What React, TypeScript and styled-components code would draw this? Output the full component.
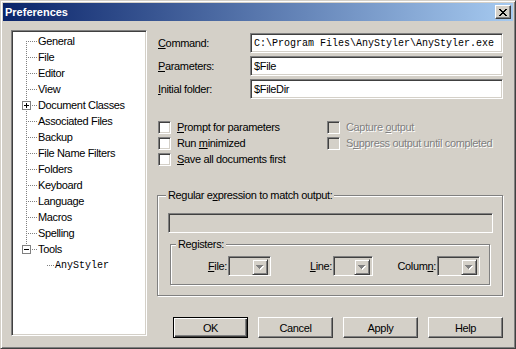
import React from 'react'
import styled, { createGlobalStyle } from 'styled-components'

const FACE = '#d4d0c8'
const SHADOW = '#808080'
const DARK = '#404040'
const MONO = '"Liberation Mono", "DejaVu Sans Mono", monospace'
const SANS = '"Liberation Sans", Arial, sans-serif'

const GlobalStyle = createGlobalStyle`
    html, body {
        margin: 0;
        padding: 0;
        background: ${FACE};
    }
    body {
        font-family: ${SANS};
        font-size: 11px;
        letter-spacing: -0.35px;
        color: #000;
    }
`

type TreeItem = {
    label: string
    expander?: 'plus' | 'minus'
}

const treeItems: TreeItem[] = [
    { label: 'General' },
    { label: 'File' },
    { label: 'Editor' },
    { label: 'View' },
    { label: 'Document Classes', expander: 'plus' },
    { label: 'Associated Files' },
    { label: 'Backup' },
    { label: 'File Name Filters' },
    { label: 'Folders' },
    { label: 'Keyboard' },
    { label: 'Language' },
    { label: 'Macros' },
    { label: 'Spelling' },
    { label: 'Tools', expander: 'minus' },
]

const CloseGlyph = () => (
    <svg width="8" height="7" viewBox="0 0 8 7" shapeRendering="crispEdges">
        <path
            fill="#000"
            d="M0 0h2v1h-2z M6 0h2v1h-2z M1 1h2v1h-2z M5 1h2v1h-2z M2 2h4v1h-4z M3 3h2v1h-2z M2 4h4v1h-4z M1 5h2v1h-2z M5 5h2v1h-2z M0 6h2v1h-2z M6 6h2v1h-2z"
        />
    </svg>
)

const ArrowGlyph = () => (
    <svg width="8" height="5" viewBox="0 0 8 5" shapeRendering="crispEdges">
        <path
            fill="#fff"
            d="M1 1h7v1h-7z M2 2h5v1h-5z M3 3h3v1h-3z M4 4h1v1h-1z"
        />
        <path
            fill={SHADOW}
            d="M0 0h7v1h-7z M1 1h5v1h-5z M2 2h3v1h-3z M3 3h1v1h-1z"
        />
    </svg>
)

// connector lines for one tree row: level 0 on x=12, level 1 on x=31
const TreeLines = ({
    first,
    last,
    child,
    expander,
}: {
    first?: boolean
    last?: boolean
    child?: boolean
    expander?: 'plus' | 'minus'
}) => {
    const x = child ? 31.5 : 12.5
    const width = child ? 41 : 24
    return (
        <svg width={width} height="16" shapeRendering="crispEdges">
            <g stroke={SHADOW} strokeWidth="1" strokeDasharray="1 1">
                <line x1={x} y1={first ? 8 : 0} x2={x} y2={last ? 8 : 16} />
                <line x1={x + 1} y1="8.5" x2={width - 1} y2="8.5" />
            </g>
            {expander && (
                <g>
                    <rect
                        x="8.5"
                        y="4.5"
                        width="8"
                        height="8"
                        fill="#fff"
                        stroke={SHADOW}
                    />
                    <line x1="10" y1="8.5" x2="15" y2="8.5" stroke="#000" />
                    {expander === 'plus' && (
                        <line x1="12.5" y1="6" x2="12.5" y2="11" stroke="#000" />
                    )}
                </g>
            )}
        </svg>
    )
}

export default function App(): JSX.Element {
    const renderTree = () =>
        treeItems.map((item, i) => (
            <TreeRow key={item.label}>
                <TreeLines
                    first={i === 0}
                    last={i === treeItems.length - 1}
                    expander={item.expander}
                />
                <TreeLabel>{item.label}</TreeLabel>
            </TreeRow>
        ))

    return (
        <>
            <GlobalStyle />
            <Window>
                <TitleBar>
                    <Title>Preferences</Title>
                    <CloseButton>
                        <CloseGlyph />
                    </CloseButton>
                </TitleBar>
                <Body>
                    <TreePanel>
                        {renderTree()}
                        <TreeRow>
                            <TreeLines child first last />
                            <TreeLabel $mono>AnyStyler</TreeLabel>
                        </TreeRow>
                    </TreePanel>

                    <RightPanel>
                        <Form>
                            <Label>
                                <u>C</u>ommand:
                            </Label>
                            <TextField $mono>
                                C:\Program Files\AnyStyler\AnyStyler.exe
                            </TextField>
                            <Label>
                                <u>P</u>arameters:
                            </Label>
                            <TextField>$File</TextField>
                            <Label>
                                <u>I</u>nitial folder:
                            </Label>
                            <TextField>$FileDir</TextField>
                        </Form>

                        <Options>
                            <Option>
                                <CheckBox />
                                <span>
                                    <u>P</u>rompt for parameters
                                </span>
                            </Option>
                            <Option $disabled>
                                <CheckBox $disabled />
                                <span>
                                    Capture <u>o</u>utput
                                </span>
                            </Option>
                            <Option>
                                <CheckBox />
                                <span>
                                    Run <u>m</u>inimized
                                </span>
                            </Option>
                            <Option $disabled>
                                <CheckBox $disabled />
                                <span>
                                    S<u>u</u>ppress output until completed
                                </span>
                            </Option>
                            <Option>
                                <CheckBox />
                                <span>
                                    <u>S</u>ave all documents first
                                </span>
                            </Option>
                        </Options>

                        <OutputGroup>
                            <Caption $indent={8}>
                                Regular e<u>x</u>pression to match output:
                            </Caption>
                            <RegexField />
                            <RegistersGroup>
                                <Caption $indent={5}>Registers:</Caption>
                                <Registers>
                                    <RegisterCell>
                                        <span>
                                            <u>F</u>ile:
                                        </span>
                                        <Combo $width={43}>
                                            <ComboButton>
                                                <ArrowGlyph />
                                            </ComboButton>
                                        </Combo>
                                    </RegisterCell>
                                    <RegisterCell>
                                        <span>
                                            <u>L</u>ine:
                                        </span>
                                        <Combo $width={40}>
                                            <ComboButton>
                                                <ArrowGlyph />
                                            </ComboButton>
                                        </Combo>
                                    </RegisterCell>
                                    <RegisterCell>
                                        <span>
                                            Colum<u>n</u>:
                                        </span>
                                        <Combo $width={43}>
                                            <ComboButton>
                                                <ArrowGlyph />
                                            </ComboButton>
                                        </Combo>
                                    </RegisterCell>
                                </Registers>
                            </RegistersGroup>
                        </OutputGroup>

                        <ButtonRow>
                            <Button $default>OK</Button>
                            <Button>Cancel</Button>
                            <Button>Apply</Button>
                            <Button>Help</Button>
                        </ButtonRow>
                    </RightPanel>
                </Body>
            </Window>
        </>
    )
}

const raised = `
    border: 1px solid;
    border-color: #fff ${DARK} ${DARK} #fff;
    box-shadow: inset -1px -1px 0 ${SHADOW};
`

const sunken = `
    border: 1px solid;
    border-color: ${SHADOW} #fff #fff ${SHADOW};
    box-shadow: inset 1px 1px 0 ${DARK}, inset -1px -1px 0 ${FACE};
`

const etched = `
    border: 1px solid ${SHADOW};
    box-shadow: 1px 1px 0 #fff, inset 1px 1px 0 #fff;
`

const Window = styled.div`
    box-sizing: border-box;
    width: 516px;
    height: 349px;
    display: flex;
    flex-direction: column;
    padding: 2px;

    background: ${FACE};
    border: 1px solid;
    border-color: ${FACE} ${DARK} ${DARK} ${FACE};
    box-shadow: inset 1px 1px 0 #fff, inset -1px -1px 0 ${SHADOW};
`

const TitleBar = styled.div`
    height: 18px;
    display: flex;
    align-items: center;
    justify-content: space-between;
    padding: 0 2px;

    background: linear-gradient(to right, #0a246a, #a6caf0);
`

const Title = styled.span`
    color: #fff;
    font-weight: bold;
    font-size: 11px;
    letter-spacing: 0;
`

const CloseButton = styled.div`
    box-sizing: border-box;
    width: 16px;
    height: 14px;
    display: flex;
    align-items: center;
    justify-content: center;

    background: ${FACE};
    ${raised}
`

const Body = styled.div`
    flex: 1;
    display: flex;
    gap: 10px;
    padding: 9px 10px 8px 8px;
`

const TreePanel = styled.div`
    box-sizing: border-box;
    width: 136px;
    height: 306px;
    flex-shrink: 0;
    padding: 2px;

    background: #fff;
    ${sunken}
`

const TreeRow = styled.div`
    height: 16px;
    display: flex;
    align-items: center;
`

const TreeLabel = styled.span<{ $mono?: boolean }>`
    font-family: ${p => (p.$mono ? MONO : SANS)};
    font-size: ${p => (p.$mono ? '10px' : '11px')};
    letter-spacing: ${p => (p.$mono ? '0' : '-0.35px')};
    white-space: nowrap;
`

const RightPanel = styled.div`
    flex: 1;
    display: flex;
    flex-direction: column;
`

const Form = styled.div`
    display: grid;
    grid-template-columns: 93px 1fr;
    row-gap: 3px;
    align-items: center;
    margin-top: 3px;
`

const Label = styled.span`
    padding-left: 1px;
    white-space: nowrap;
`

const TextField = styled.div<{ $mono?: boolean }>`
    box-sizing: border-box;
    height: 20px;
    display: flex;
    align-items: center;
    padding-left: 3px;

    background: #fff;
    ${sunken}
    font-family: ${p => (p.$mono ? MONO : SANS)};
    font-size: ${p => (p.$mono ? '10px' : '11px')};
    letter-spacing: ${p => (p.$mono ? '0' : '-0.35px')};
    white-space: nowrap;
    overflow: hidden;
`

const Options = styled.div`
    display: grid;
    grid-template-columns: 169px 1fr;
    grid-auto-rows: 16px;
    margin-top: 20px;
    padding-left: 1px;
`

const Option = styled.div<{ $disabled?: boolean }>`
    display: flex;
    align-items: center;
    gap: 6px;
    white-space: nowrap;

    color: ${p => (p.$disabled ? SHADOW : '#000')};
    text-shadow: ${p => (p.$disabled ? '1px 1px 0 #fff' : 'none')};
`

const CheckBox = styled.div<{ $disabled?: boolean }>`
    box-sizing: border-box;
    width: 13px;
    height: 13px;
    flex-shrink: 0;

    background: ${p => (p.$disabled ? FACE : '#fff')};
    ${sunken}
`

const OutputGroup = styled.div`
    box-sizing: border-box;
    width: 346px;
    margin-top: 28px;
    padding: 0 9px 10px 10px;
    ${etched}
`

const Caption = styled.div<{ $indent: number }>`
    width: fit-content;
    height: 13px;
    line-height: 13px;
    margin: -7px 0 0 ${p => p.$indent - 10}px;
    padding: 0 2px;
    background: ${FACE};
`

const RegexField = styled.div`
    box-sizing: border-box;
    height: 20px;
    margin-top: 11px;

    background: ${FACE};
    ${sunken}
`

const RegistersGroup = styled.div`
    margin: 11px 3px 0 2px;
    padding: 0 9px 8px 0;
    ${etched}

    ${Caption} {
        margin-left: 5px;
    }
`

const Registers = styled.div`
    display: grid;
    grid-template-columns: 100px 102px 107px;
    margin-top: 5px;
`

const RegisterCell = styled.div`
    display: flex;
    align-items: center;
    justify-content: flex-end;
    gap: 1px;
    white-space: nowrap;
`

const Combo = styled.div<{ $width: number }>`
    box-sizing: border-box;
    width: ${p => p.$width}px;
    height: 20px;
    display: flex;
    justify-content: flex-end;
    padding: 2px;

    background: ${FACE};
    ${sunken}
`

const ComboButton = styled.div`
    box-sizing: border-box;
    width: 16px;
    height: 16px;
    display: flex;
    align-items: center;
    justify-content: center;

    background: ${FACE};
    border: 1px solid;
    border-color: ${FACE} ${DARK} ${DARK} ${FACE};
    box-shadow: inset 1px 1px 0 #fff, inset -1px -1px 0 ${SHADOW};
`

const ButtonRow = styled.div`
    display: flex;
    justify-content: flex-end;
    gap: 10px;
    margin-top: auto;
`

const Button = styled.div<{ $default?: boolean }>`
    box-sizing: border-box;
    width: 75px;
    height: 21px;
    display: flex;
    align-items: center;
    justify-content: center;

    background: ${FACE};
    border: 1px solid;
    border-color: ${p =>
        p.$default ? '#000' : `#fff ${DARK} ${DARK} #fff`};
    box-shadow: ${p =>
        p.$default
            ? `inset 1px 1px 0 #fff, inset -1px -1px 0 ${DARK}, inset -2px -2px 0 ${SHADOW}`
            : `inset -1px -1px 0 ${SHADOW}`};
`
